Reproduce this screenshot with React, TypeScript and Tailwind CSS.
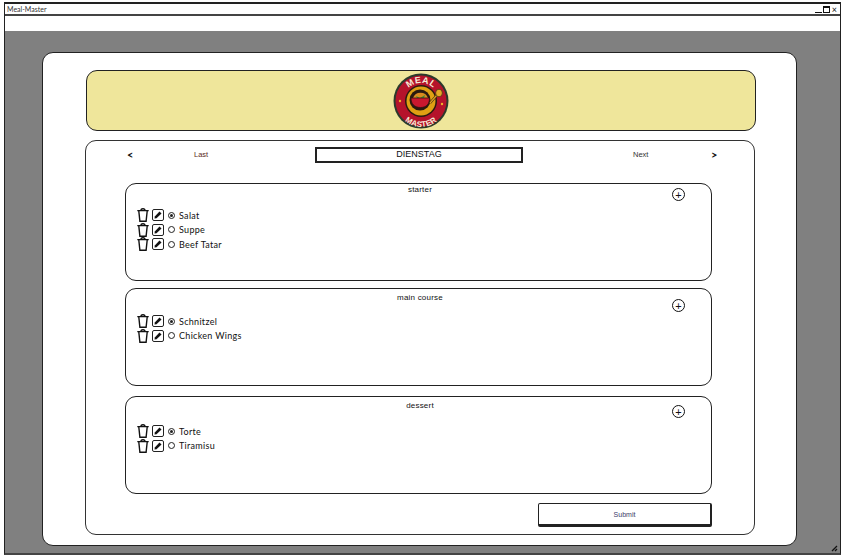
const font = "font-['Lato','Noto_Sans',sans-serif]"
const plain = "font-['Liberation_Sans',sans-serif]"

const SECTIONS = [
  { title: 'starter', titleTop: 'mt-[1px]', plusTop: 'top-[4px]', first: 'mt-[13px]', spacing: 'mb-[7px]', items: ['Salat', 'Suppe', 'Beef Tatar'] },
  { title: 'main course', titleTop: 'mt-[4px]', plusTop: 'top-[10px]', first: 'mt-[11px]', spacing: 'mb-[10px]', items: ['Schnitzel', 'Chicken Wings'] },
  { title: 'dessert', titleTop: 'mt-[4px]', plusTop: 'top-[8px]', first: 'mt-[13px]', spacing: 'mb-0', items: ['Torte', 'Tiramisu'] },
]

function Trash() {
  return (
    <svg width="12" height="14" viewBox="0 0 12 14" fill="none" stroke="#111" strokeWidth="1.4" className="shrink-0">
      <path d="M0.3 2.6H11.7M4 2.6C4 1.2 4.6 0.7 6 0.7C7.4 0.7 8 1.2 8 2.6M1.8 3L2.9 13.3H9.1L10.2 3" />
    </svg>
  )
}

function Edit() {
  return (
    <span className="ml-[3px] flex h-[12px] w-[12px] shrink-0 items-center justify-center rounded-[2px] border border-[#222]">
      <svg width="8" height="8" viewBox="0 0 8 8" fill="#111">
        <path d="M5.5 0.5L7.5 2.5L2.5 7.2L0.5 7.5L0.8 5.5Z" />
      </svg>
    </span>
  )
}

function Radio({ on }: { on: boolean }) {
  return (
    <span className="ml-[4px] flex h-[7px] w-[7px] shrink-0 items-center justify-center rounded-full border border-[#222]">
      {on && <span className="h-[3px] w-[3px] rounded-full bg-[#222]" />}
    </span>
  )
}

function Logo() {
  return (
    <svg width="56" height="56" viewBox="0 0 56 56">
      <defs>
        <path id="arcTop" d="M10 28A18 18 0 0 1 46 28" fill="none" />
        <path id="arcBottom" d="M4 30A24 24 0 0 0 52 30" fill="none" />
      </defs>
      <circle cx="28" cy="28" r="27.5" fill="#2c3a2c" />
      <circle cx="28" cy="28" r="25.5" fill="#b5132b" />
      <circle cx="28" cy="28" r="16" fill="#2a1c10" />
      <circle cx="28" cy="28" r="14.5" fill="#e0a013" />
      <circle cx="27" cy="27" r="10.5" fill="#2a1a10" />
      <path d="M20 25A8 8 0 0 1 35 25Z" fill="#d98c1f" />
      <path d="M23 23L27 25L32 22L31 25H24Z" fill="#3f8a36" />
      <path d="M18 25H36.5C36.5 31 33.5 34.5 27.5 34.5C21.5 34.5 18 31 18 25Z" fill="#c9182f" stroke="#3a120f" strokeWidth="0.8" />
      <path d="M37 30L44 22" stroke="#3a2a10" strokeWidth="2.4" />
      <path d="M37 30L44 22" stroke="#e2a31f" strokeWidth="1.2" />
      <ellipse cx="46" cy="20" rx="3.4" ry="3.8" fill="#e7a925" stroke="#4a3312" strokeWidth="0.8" />
      <circle cx="7" cy="28" r="1.2" fill="#f0b429" />
      <circle cx="49" cy="31" r="1.2" fill="#f0b429" />
      <text fontFamily="'Liberation Sans',sans-serif" fontWeight="700" fontSize="9" fill="#f6ead8" letterSpacing="0.5">
        <textPath href="#arcTop" startOffset="50%" textAnchor="middle">MEAL</textPath>
      </text>
      <text fontFamily="'Liberation Sans',sans-serif" fontWeight="700" fontSize="8" fill="#f6ead8" letterSpacing="0.2">
        <textPath href="#arcBottom" startOffset="50%" textAnchor="middle">MASTER</textPath>
      </text>
    </svg>
  )
}

export default function App() {
  return (
    <div className={`h-[557px] w-[845px] overflow-hidden bg-white pl-[4px] pr-[4px] pt-[2px] ${font} text-[#111]`}>
      <div className="flex h-[553px] flex-col border-2 border-b-[#444] border-l-[1px] border-r-[1px] border-[#222]">
        {/* title bar */}
        <div className="flex h-[12px] shrink-0 items-center justify-between border-b-2 border-[#444] pl-[2px] pr-[3px]">
          <span className="text-[7px] leading-none text-[#333]">Meal-Master</span>
          <div className="flex items-center gap-[1px]">
            <span className="mt-[6px] h-[1px] w-[7px] bg-[#111]" />
            <span className="h-[7px] w-[7px] border border-t-2 border-[#111]" />
            <span className="ml-[1px] text-[9px] leading-none">×</span>
          </div>
        </div>
        <div className="h-[15px] shrink-0 bg-white" />

        {/* page */}
        <div className="relative flex-1 bg-[#808080] pl-[37px] pt-[21px]">
          <div className="h-[494px] w-[755px] rounded-[11px] border border-[#222] bg-white pl-[43px] pt-[17px]">
            <div className="flex h-[61px] w-[670px] items-center justify-center rounded-[11px] border border-[#222] bg-[#efe69b]">
              <Logo />
            </div>

            <div className="mt-[9px] h-[395px] w-[670px] -translate-x-[1px] rounded-[11px] border border-[#333] pt-[7px]">
              {/* day nav */}
              <div className="flex h-[14px] items-center text-[7.5px]">
                <span className="ml-[41px] mb-[2px] w-[6px] text-[11px] font-bold leading-none">&lt;</span>
                <span className={`ml-[61px] w-[121px] ${plain} text-[#5a2a1a]`}>Last</span>
                <span className={`flex h-[16px] w-[208px] items-center justify-center border-2 border-[#222] ${plain} text-[9px]`}>DIENSTAG</span>
                <span className={`ml-[110px] w-[78px] ${plain} text-[#333]`}>Next</span>
                <span className="mb-[2px] text-[11px] font-bold leading-none">&gt;</span>
              </div>

              {/* meal sections */}
              <div className="ml-[39px] mt-[21px] flex w-[587px] flex-col">
                {SECTIONS.map(section => (
                  <div key={section.title} className={`relative h-[98px] rounded-[11px] border border-[#222] pl-[11px] ${section.spacing}`}>
                    <div className={`${section.titleTop} pr-[8px] text-center ${plain} text-[8px] tracking-[0.2px] leading-[10px]`}>{section.title}</div>
                    <div className={`${section.plusTop} absolute right-[26px] flex h-[13px] w-[13px] items-center justify-center rounded-full border border-[#111] text-[11px] leading-none`}>+</div>
                    <div className={`${section.first} flex flex-col`}>
                      {section.items.map((item, i) => (
                        <div key={item} className="flex h-[14.5px] items-center">
                          <Trash />
                          <Edit />
                          <Radio on={i === 0} />
                          <span className="ml-[4px] text-[9px] tracking-[0.3px]">{item}</span>
                        </div>
                      ))}
                    </div>
                  </div>
                ))}
              </div>

              <div className={`ml-[452px] mt-[9px] flex h-[24px] w-[174px] items-center justify-center rounded-[2px] border border-b-[3px] border-r-2 border-[#222] pt-[3px] ${plain} text-[7px] text-[#3a3a6a]`}>
                Submit
              </div>
            </div>
          </div>
          <svg width="7" height="7" viewBox="0 0 7 7" className="absolute bottom-[1px] right-[2px]" stroke="#111" strokeWidth="1.3">
            <path d="M1 6L6 1M4 6L6 4" />
          </svg>
        </div>
      </div>
    </div>
  )
}
